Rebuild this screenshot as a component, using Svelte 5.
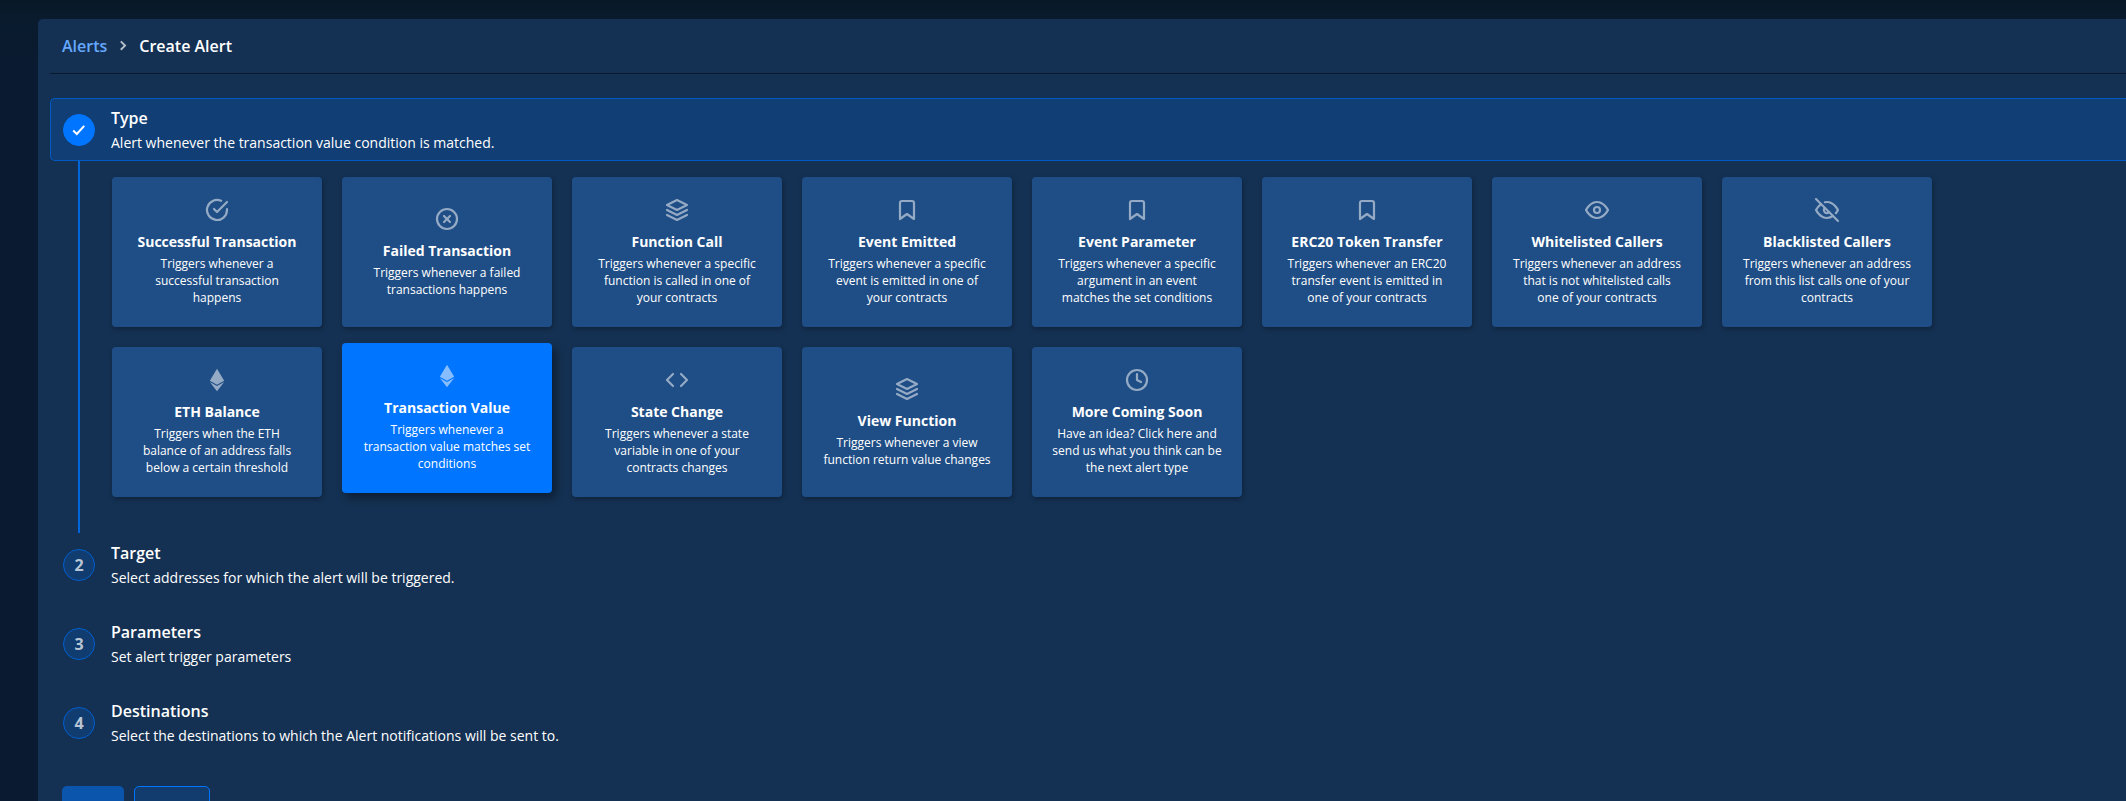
<script>
  const cards = [
    { icon: 'check', title: 'Successful Transaction', text: 'Triggers whenever a successful transaction happens' },
    { icon: 'x', title: 'Failed Transaction', text: 'Triggers whenever a failed transactions happens' },
    { icon: 'layers', title: 'Function Call', text: 'Triggers whenever a specific function is called in one of your contracts' },
    { icon: 'bookmark', title: 'Event Emitted', text: 'Triggers whenever a specific event is emitted in one of your contracts' },
    { icon: 'bookmark', title: 'Event Parameter', text: 'Triggers whenever a specific argument in an event matches the set conditions' },
    { icon: 'bookmark', title: 'ERC20 Token Transfer', text: 'Triggers whenever an ERC20 transfer event is emitted in one of your contracts' },
    { icon: 'eye', title: 'Whitelisted Callers', text: 'Triggers whenever an address that is not whitelisted calls one of your contracts' },
    { icon: 'eyeOff', title: 'Blacklisted Callers', text: 'Triggers whenever an address from this list calls one of your contracts' },
    { icon: 'eth', title: 'ETH Balance', text: 'Triggers when the ETH balance of an address falls below a certain threshold' },
    { icon: 'eth', title: 'Transaction Value', text: 'Triggers whenever a transaction value matches set conditions', selected: true },
    { icon: 'code', title: 'State Change', text: 'Triggers whenever a state variable in one of your contracts changes' },
    { icon: 'layers', title: 'View Function', text: 'Triggers whenever a view function return value changes' },
    { icon: 'clock', title: 'More Coming Soon', text: 'Have an idea? Click here and send us what you think can be the next alert type' },
  ];

  const icons = {
    check: ['M22 11.08V12a10 10 0 1 1-5.93-9.14', 'M22 4 12 14.01l-3-3'],
    x: ['M12 2a10 10 0 1 0 0 20 10 10 0 1 0 0-20z', 'M15 9l-6 6', 'M9 9l6 6'],
    layers: ['M12 2 2 7l10 5 10-5-10-5z', 'M2 17l10 5 10-5', 'M2 12l10 5 10-5'],
    bookmark: ['M19 21l-7-5-7 5V5a2 2 0 0 1 2-2h10a2 2 0 0 1 2 2z'],
    eye: ['M1 12s4-8 11-8 11 8 11 8-4 8-11 8-11-8-11-8z', 'M12 9a3 3 0 1 0 0 6 3 3 0 1 0 0-6z'],
    eyeOff: [
      'M17.94 17.94A10.07 10.07 0 0 1 12 20c-7 0-11-8-11-8a18.45 18.45 0 0 1 5.06-5.94M9.9 4.24A9.12 9.12 0 0 1 12 4c7 0 11 8 11 8a18.5 18.5 0 0 1-2.16 3.19m-6.72-1.07a3 3 0 1 1-4.24-4.24',
      'M1 1l22 22',
    ],
    code: ['M16 18l6-6-6-6', 'M8 6l-6 6 6 6'],
    clock: ['M12 2a10 10 0 1 0 0 20 10 10 0 1 0 0-20z', 'M12 6v6l4 2'],
  };

  const steps = [
    { n: 2, title: 'Target', text: 'Select addresses for which the alert will be triggered.' },
    { n: 3, title: 'Parameters', text: 'Set alert trigger parameters' },
    { n: 4, title: 'Destinations', text: 'Select the destinations to which the Alert notifications will be sent to.' },
  ];
</script>

<div class="page">
  <main class="panel">
    <nav class="crumbs">
      <a href="#alerts">Alerts</a>
      <svg class="chevron" width="16" height="16" viewBox="0 0 16 16"><path d="M5.8 3.4 10 7.6l-4.2 4.2" /></svg>
      <span>Create Alert</span>
    </nav>

    <section class="step-head active">
      <div class="badge done">
        <svg width="16" height="16" viewBox="0 0 16 16"><path d="M2.2 8.6 5.8 12l7.4-8.2" /></svg>
      </div>
      <div class="copy">
        <h2>Type</h2>
        <p>Alert whenever the transaction value condition is matched.</p>
      </div>
    </section>

    <div class="step-body">
      <div class="grid">
        {#each cards as card}
          <button class="card" class:selected={card.selected}>
            <svg class="icon" width="24" height="24" viewBox="0 0 24 24">
              {#if card.icon === 'eth'}
                <g class="solid">
                  <path d="M12 .8 19.2 12.7 12 16.8 4.8 12.7z" />
                  <path d="M4.8 13.9 12 18 19.2 13.9 12 23.2z" />
                </g>
              {:else}
                {#each icons[card.icon] as d}<path {d} />{/each}
              {/if}
            </svg>
            <strong>{card.title}</strong>
            <span>{card.text}</span>
          </button>
        {/each}
      </div>
    </div>

    {#each steps as step}
      <section class="step-head">
        <div class="badge">{step.n}</div>
        <div class="copy">
          <h2>{step.title}</h2>
          <p>{step.text}</p>
        </div>
      </section>
    {/each}

    <div class="actions">
      <button class="btn primary" aria-label="Next"></button>
      <button class="btn outline" aria-label="Cancel"></button>
    </div>
  </main>
</div>

<style>
  :global(body) {
    overflow: hidden;
    background: #0a1b30;
  }
  .page {
    box-sizing: border-box;
    height: 801px;
    overflow: hidden;
    padding: 19px 0 0 38px;
    background: linear-gradient(#081827, #091b2d 19px, rgba(9, 27, 45, 0) 60px), #0a1a30;
    font-family: 'Open Sans', 'Noto Sans', sans-serif;
    color: #fff;
  }
  .panel {
    box-sizing: border-box;
    height: 860px;
    padding-left: 12px;
    border-top-left-radius: 5px;
    background: #143153;
  }
  .crumbs {
    display: flex;
    align-items: center;
    box-sizing: border-box;
    height: 55px;
    margin-bottom: 24px;
    padding: 0 0 0 12px;
    border-bottom: 1px solid #091a2e;
    font-size: 16px;
    font-weight: 600;
    line-height: 24px;
  }
  .crumbs a {
    color: #66a8ff;
    text-decoration: none;
  }
  .chevron {
    margin: 0 8px;
    fill: none;
    stroke: #b3bec9;
    stroke-width: 2;
  }
  .step-head {
    display: flex;
    align-items: flex-start;
    box-sizing: border-box;
    height: 63px;
    margin-bottom: 16px;
    padding-left: 12px;
    border: 1px solid transparent;
    border-right: 0;
  }
  .step-head.active {
    margin-bottom: 0;
    border-color: #005bc4;
    border-radius: 5px 0 0 5px;
    background: #103e75;
  }
  .badge {
    display: flex;
    align-items: center;
    justify-content: center;
    box-sizing: border-box;
    width: 32px;
    height: 32px;
    margin: 15px 16px 0 0;
    border: 1px solid #005fd0;
    border-radius: 50%;
    background: #113c6f;
    color: #b8c5d4;
    font-size: 16px;
    font-weight: 700;
  }
  .badge.done {
    border-color: #0075ff;
    background: #0075ff;
  }
  .badge svg {
    fill: none;
    stroke: #fff;
    stroke-width: 2;
  }
  .copy {
    padding-top: 7px;
  }
  h2,
  p {
    margin: 0;
  }
  h2 {
    font-size: 16px;
    font-weight: 600;
    line-height: 24px;
  }
  p {
    font-size: 14px;
    line-height: 26px;
  }
  .step-body {
    box-sizing: border-box;
    height: 372px;
    margin-left: 28px;
    padding: 16px 0 0 32px;
    border-left: 2px solid #0066db;
  }
  .grid {
    display: grid;
    grid-template-columns: repeat(8, 210px);
    grid-auto-rows: 150px;
    gap: 20px;
  }
  .card {
    display: flex;
    flex-direction: column;
    align-items: center;
    justify-content: center;
    padding: 0.3px 20px 0;
    border: 0;
    border-radius: 4px;
    background: #1f4e86;
    box-shadow: 1px 2px 5px rgba(0, 0, 0, 0.3);
    color: #fff;
    font-family: inherit;
    text-align: center;
  }
  .card.selected {
    background: #0075ff;
    box-shadow: 4px 5px 10px rgba(0, 0, 0, 0.4);
    transform: translateY(-4px);
  }
  .icon {
    margin-bottom: 10px;
    fill: none;
    stroke: #fff;
    stroke-width: 2.2;
    stroke-linecap: round;
    stroke-linejoin: round;
    opacity: 0.52;
  }
  .solid {
    fill: #fff;
    stroke: none;
  }
  .card strong {
    margin-bottom: 3px;
    font-size: 14px;
    font-weight: 700;
    line-height: 20px;
    white-space: nowrap;
  }
  .card span {
    font-size: 12px;
    line-height: 17.1px;
  }
  .actions {
    display: flex;
    gap: 10px;
    padding: 16px 0 0 12px;
  }
  .btn {
    height: 38px;
    padding: 0;
    border: 0;
    border-radius: 5px;
  }
  .primary {
    width: 62px;
    background: #0b56ac;
  }
  .outline {
    width: 76px;
    border: 1px solid #0075ff;
    background: #123c6d;
  }
</style>
